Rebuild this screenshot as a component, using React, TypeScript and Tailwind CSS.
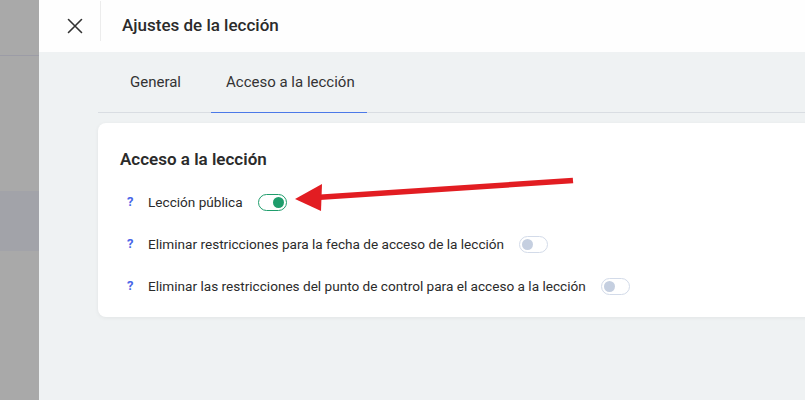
import React from "react";

function Toggle({ on }: { on: boolean }) {
  return on ? (
    <span className="flex h-[17px] w-[29px] items-center justify-end rounded-full border-[1.5px] border-[#1f9d6c] bg-white pr-[2px]">
      <span className="h-[11px] w-[11px] rounded-full bg-[#1f9d6c]" />
    </span>
  ) : (
    <span className="flex h-[17px] w-[29px] items-center justify-start rounded-full border-[1.5px] border-[#d3dbe9] bg-white pl-[2px]">
      <span className="h-[11px] w-[11px] rounded-full bg-[#c5cfe0]" />
    </span>
  );
}

function Row({ label, on }: { label: string; on: boolean }) {
  return (
    <div className="flex h-[42px] items-center">
      <span className="ml-[7px] w-[21px] text-[13px] font-bold text-[#4a66e8]">?</span>
      <span className="text-[13.6px] text-[#2b2b2b]">{label}</span>
      <span className="ml-[15px]">
        <Toggle on={on} />
      </span>
    </div>
  );
}

export default function App() {
  return (
    <div
      className="relative flex h-[400px] w-[805px] overflow-hidden bg-[#eff2f3]"
      style={{ fontFamily: "Roboto, 'Noto Sans', sans-serif" }}
    >
      {/* dimmed backdrop strip */}
      <div className="flex w-[39px] shrink-0 flex-col bg-[#a9a9a9]">
        <div className="h-[56px] border-b border-[#9c9ca6]" />
        <div className="mt-[135px] h-[60px] bg-[#a2a3a9]" />
      </div>

      {/* drawer panel */}
      <div className="flex min-w-0 flex-1 flex-col">
        <div className="flex h-[52px] shrink-0 items-center bg-[#fefefe]">
          <div className="flex h-full w-[61px] items-center pl-[28px]">
            <svg width="16" height="16" viewBox="0 0 16 16" fill="none" stroke="#333" strokeWidth="1.6" strokeLinecap="round">
              <path d="M1.5 1.5 L14.5 14.5 M14.5 1.5 L1.5 14.5" />
            </svg>
          </div>
          <div className="mb-[10px] h-[40px] w-px bg-[#ececec]" />
          <div className="pl-[21px] text-[17px] font-medium text-[#2b2b2b]">Ajustes de la lección</div>
        </div>

        <div className="flex flex-1 flex-col pl-[59px]">
          <div className="flex h-[61px] shrink-0 border-b border-[#d9dde2]">
            <div className="flex items-center pl-[32px] pr-[30px] text-[15px] text-[#333]">General</div>
            <div className="-mb-px flex items-center border-b border-[#4b79e8] pl-[15px] pr-[12px] text-[15px] text-[#333]">
              Acceso a la lección
            </div>
          </div>

          <div className="mt-[10px] h-[194px] w-[730px] rounded-lg bg-white pl-[22px] pt-[26px] shadow-[0_1px_4px_rgba(0,0,0,0.06)]">
            <div className="h-[20px] text-[17px] font-semibold leading-[20px] text-[#2b2b2b]">Acceso a la lección</div>
            <div className="mt-[12px]">
              <Row label="Lección pública" on={true} />
              <Row label="Eliminar restricciones para la fecha de acceso de la lección" on={false} />
              <Row label="Eliminar las restricciones del punto de control para el acceso a la lección" on={false} />
            </div>
          </div>
        </div>
      </div>

      {/* annotation arrow */}
      <svg className="pointer-events-none absolute left-0 top-0" width="805" height="400" viewBox="0 0 805 400">
        <path d="M316 197.5 L573 180.5" stroke="#e21d22" strokeWidth="5.5" strokeLinecap="butt" />
        <polygon points="295,199 322,184 321,211" fill="#e21d22" />
      </svg>
    </div>
  );
}
